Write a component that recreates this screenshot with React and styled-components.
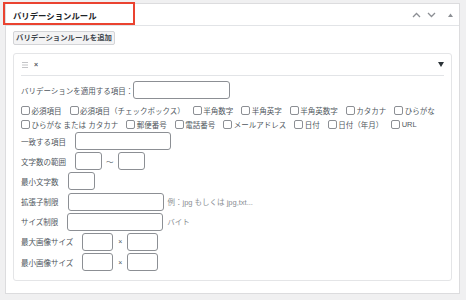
import React from "react";
import styled, { createGlobalStyle } from "styled-components";

const GlobalStyle = createGlobalStyle`
  html, body {
    margin: 0;
    padding: 0;
    background: #f0f0f1;
  }
  body {
    font-family: "Liberation Sans", "Noto Sans CJK JP", sans-serif;
    color: #3c434a;
  }
`;

const Page = styled.div`
  padding: 3px 6px 6px 5px;
  height: 300px;
  box-sizing: border-box;
`;

const Postbox = styled.div`
  position: relative;
  width: 455px;
  height: 291px;
  box-sizing: border-box;
  background: #fff;
  border: 1px solid #dcdcde;
  display: flex;
  flex-direction: column;
`;

const Highlight = styled.div`
  position: absolute;
  left: -3px;
  top: -2px;
  width: 132px;
  height: 23px;
  box-sizing: border-box;
  border: 2.5px solid #ea4330;
  pointer-events: none;
`;

const Header = styled.div`
  height: 21px;
  flex-shrink: 0;
  border-bottom: 1px solid #e2e4e7;
  display: flex;
  align-items: center;
  justify-content: space-between;
  padding: 0 6px 0 7px;
`;

const Title = styled.h2`
  margin: 0;
  font-size: 8.4px;
  font-weight: 700;
  color: #1d2327;
`;

const HeaderTools = styled.div`
  display: flex;
  align-items: center;
  gap: 6px;
`;

const Body = styled.div`
  padding: 5px 7px 0 7px;
  display: flex;
  flex-direction: column;
  align-items: flex-start;
`;

const AddButton = styled.button`
  font-family: inherit;
  font-size: 7.4px;
  font-weight: 700;
  color: #3c434a;
  height: 14px;
  padding: 0 2px;
  background: #f3f3f4;
  border: 1px solid #d3d4d7;
  border-radius: 2px;
  line-height: 12px;
`;

const Panel = styled.div`
  margin-top: 8px;
  width: 439px;
  height: 228px;
  box-sizing: border-box;
  border: 1px solid #e4e5e7;
  border-radius: 3px;
  padding: 0 7px;
`;

const PanelHeader = styled.div`
  height: 21px;
  border-bottom: 1px solid #e2e4e7;
  display: flex;
  align-items: center;
  justify-content: space-between;
  padding: 0 0 0 1px;
`;

const HandleGroup = styled.div`
  display: flex;
  align-items: center;
  gap: 6px;
`;

const Remove = styled.span`
  font-size: 7px;
  font-weight: 700;
  color: #50575e;
  line-height: 1;
`;

const Text = styled.span`
  font-size: 7.5px;
  color: ${(p) => (p.$muted ? "#8a8e93" : "#50575e")};
  white-space: nowrap;
`;

const TargetRow = styled.div`
  margin-top: 5px;
  display: flex;
  align-items: center;
`;

const Input = styled.div`
  width: ${(p) => p.$w}px;
  height: 18px;
  box-sizing: border-box;
  border: 1px solid #8c8f94;
  border-radius: 3px;
  background: #fff;
  flex-shrink: 0;
`;

const Checks = styled.div`
  margin-top: 4px;
  display: flex;
  flex-wrap: wrap;
  column-gap: 8px;
  width: 425px;
`;

const Check = styled.label`
  display: flex;
  align-items: center;
  gap: 1.5px;
  height: 14.5px;
`;

const Box = styled.span`
  width: 9px;
  height: 9px;
  box-sizing: border-box;
  border: 1px solid #8c8f94;
  border-radius: 2px;
  background: #fff;
  flex-shrink: 0;
`;

const Fields = styled.div`
  margin-top: 0;
  display: flex;
  flex-direction: column;
  gap: 2.2px;
`;

const Field = styled.div`
  display: flex;
  align-items: center;
  gap: 4px;
  height: 18px;
`;

const Label = styled(Text)`
  margin-right: 5px;
`;

const Times = styled.span`
  font-size: 7px;
  color: #50575e;
  padding: 0 1px;
`;

const UpIcon = () => (
  <svg width="9" height="6" viewBox="0 0 9 6">
    <path d="M1 5 L4.5 1.5 L8 5" fill="none" stroke="#8c8f94" strokeWidth="1.3" />
  </svg>
);

const DownIcon = () => (
  <svg width="9" height="6" viewBox="0 0 9 6">
    <path d="M1 1 L4.5 4.5 L8 1" fill="none" stroke="#8c8f94" strokeWidth="1.3" />
  </svg>
);

const SmallUp = () => (
  <svg width="5" height="4" viewBox="0 0 5 4" style={{ marginLeft: 6 }}>
    <path d="M0 4 L2.5 0.5 L5 4 Z" fill="#8c8f94" />
  </svg>
);

const Handle = () => (
  <svg width="6" height="6" viewBox="0 0 6 6">
    <path d="M0 0.5 H6 M0 3 H6 M0 5.5 H6" stroke="#c3c4c7" strokeWidth="1" />
  </svg>
);

const Toggle = () => (
  <svg width="6" height="5" viewBox="0 0 6 5">
    <path d="M0 0 H6 L3 5 Z" fill="#2c3338" />
  </svg>
);

const checks = [
  "必須項目",
  "必須項目（チェックボックス）",
  "半角数字",
  "半角英字",
  "半角英数字",
  "カタカナ",
  "ひらがな",
  "ひらがな または カタカナ",
  "郵便番号",
  "電話番号",
  "メールアドレス",
  "日付",
  "日付（年月）",
  "URL",
];

export default function App() {
  return (
    <>
      <GlobalStyle />
      <Page>
        <Postbox>
          <Header>
            <Title>バリデーションルール</Title>
            <HeaderTools>
              <UpIcon />
              <DownIcon />
              <SmallUp />
            </HeaderTools>
          </Header>
          <Highlight />
          <Body>
            <AddButton>バリデーションルールを追加</AddButton>
            <Panel>
              <PanelHeader>
                <HandleGroup>
                  <Handle />
                  <Remove>×</Remove>
                </HandleGroup>
                <Toggle />
              </PanelHeader>
              <TargetRow>
                <Text>バリデーションを適用する項目：</Text>
                <Input $w={97} />
              </TargetRow>
              <Checks>
                {checks.map((c) => (
                  <Check key={c}>
                    <Box />
                    <Text>{c}</Text>
                  </Check>
                ))}
              </Checks>
              <Fields>
                <Field>
                  <Label>一致する項目</Label>
                  <Input $w={96} />
                </Field>
                <Field>
                  <Label>文字数の範囲</Label>
                  <Input $w={27} />
                  <Text>〜</Text>
                  <Input $w={27} />
                </Field>
                <Field>
                  <Label>最小文字数</Label>
                  <Input $w={27} />
                </Field>
                <Field>
                  <Label>拡張子制限</Label>
                  <Input $w={96} />
                  <Text $muted>例：jpg もしくは jpg,txt...</Text>
                </Field>
                <Field>
                  <Label>サイズ制限</Label>
                  <Input $w={96} />
                  <Text $muted>バイト</Text>
                </Field>
                <Field>
                  <Label>最大画像サイズ</Label>
                  <Input $w={31} />
                  <Times>×</Times>
                  <Input $w={31} />
                </Field>
                <Field>
                  <Label>最小画像サイズ</Label>
                  <Input $w={31} />
                  <Times>×</Times>
                  <Input $w={31} />
                </Field>
              </Fields>
            </Panel>
          </Body>
        </Postbox>
      </Page>
    </>
  );
}
